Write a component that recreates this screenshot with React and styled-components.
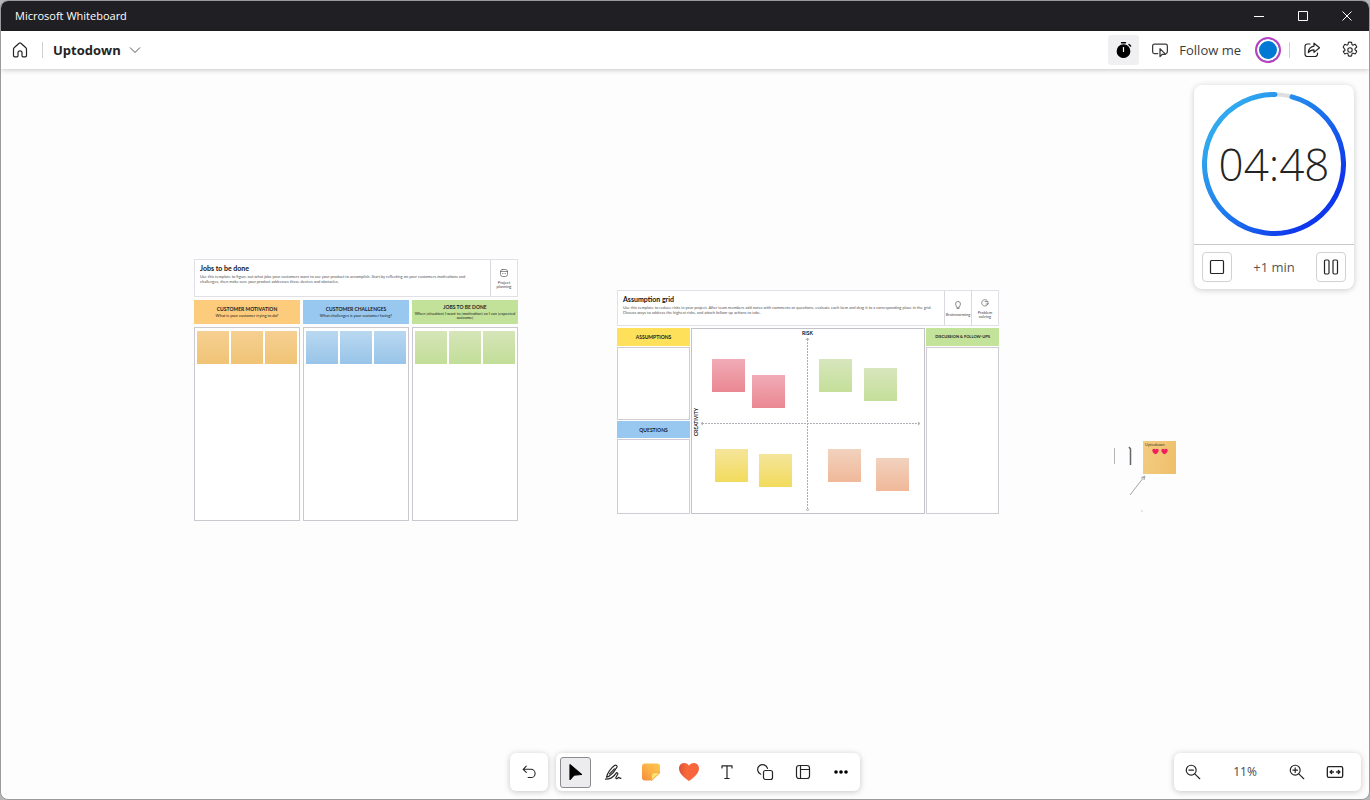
import React from 'react';
import styled, { createGlobalStyle } from 'styled-components';

const GlobalStyle = createGlobalStyle`
  * {
    box-sizing: border-box;
  }

  body {
    margin: 0;
    background: #b4b6b8;
    font-family: 'Open Sans', 'Noto Sans', sans-serif;
    color: #242424;
  }

  button {
    font-family: inherit;
    color: inherit;
    margin: 0;
    padding: 0;
    border: 0;
    background: transparent;
    cursor: pointer;
  }

  h1, h2, h3, p {
    margin: 0;
  }
`;

const Window = styled.div`
  display: flex;
  flex-direction: column;
  height: 100vh;
  border: 1px solid #9a9a9c;
  border-radius: 8px;
  overflow: hidden;
  background: #fdfdfd;
`;

const TitleBar = styled.header`
  display: flex;
  align-items: center;
  justify-content: space-between;
  height: 30px;
  flex-shrink: 0;
  padding-left: 14px;
  background: #201f23;
  color: #fff;
`;

const AppName = styled.span`
  font-size: 11px;
  line-height: 16px;
`;

const Row = styled.div`
  display: flex;
  align-items: center;
  height: 100%;
`;

const CaptionButton = styled.button`
  display: flex;
  align-items: center;
  justify-content: center;
  width: 44px;
  height: 30px;
`;

const Toolbar = styled.nav`
  position: relative;
  z-index: 1;
  display: flex;
  align-items: center;
  justify-content: space-between;
  height: 38px;
  flex-shrink: 0;
  background: #fff;
  box-shadow: 0 1px 5px rgba(0, 0, 0, 0.22);
`;

const IconButton = styled.button`
  display: flex;
  align-items: center;
  justify-content: center;
  width: 38px;
  height: 38px;
`;

const TimerToggle = styled(IconButton)`
  width: 31px;
  height: 30px;
  border-radius: 3px;
  background: #f0eff1;
`;

const Separator = styled.span`
  width: 1px;
  height: 16px;
  margin: 0 ${({ $after }) => $after}px 0 ${({ $before }) => $before}px;
  background: #d0d0d0;
`;

const BoardName = styled.button`
  display: flex;
  align-items: center;
  gap: 8px;
  font-size: 13px;
  line-height: 20px;
  font-weight: 700;
`;

const FollowButton = styled.button`
  display: flex;
  align-items: center;
  gap: 10px;
  margin: 0 14px 0 12px;
  font-size: 13px;
  line-height: 20px;
  color: #3b3b3b;
`;

const Avatar = styled.button`
  width: 26px;
  height: 26px;
  border: 2px solid #bb3fbf;
  border-radius: 50%;
  background: #0078d4;
  box-shadow: inset 0 0 0 2px #fff;
`;

const Surface = styled.main`
  position: relative;
  flex: 1;
  overflow: hidden;
`;

const Placed = styled.section`
  position: absolute;
  left: ${({ $x }) => $x}px;
  top: ${({ $y }) => $y}px;
  width: ${({ $width }) => $width}px;
`;

const BoardHeader = styled.div`
  display: flex;
  height: ${({ $height }) => $height}px;
  border: 1px solid #e2e0e6;
  background: #fff;
`;

const BoardIntro = styled.div`
  flex: 1;
  padding: 4px 6px 0 5px;
`;

const BoardTitle = styled.h2`
  font-family: Lato, sans-serif;
  font-size: 7px;
  line-height: 8px;
  font-weight: 700;
  color: #111;
`;

const BoardText = styled.p`
  margin-top: 2px;
  font-family: Lato, sans-serif;
  font-size: 4px;
  line-height: 5px;
  color: #555;
`;

const BoardTag = styled.div`
  display: flex;
  flex-direction: column;
  align-items: center;
  justify-content: center;
  gap: 3px;
  width: 27px;
  border-left: 1px solid #dad8df;
  font-family: Lato, sans-serif;
  font-size: 4px;
  line-height: 4px;
  text-align: center;
  color: #444;
`;

const Columns = styled.div`
  display: grid;
  grid-template-columns: repeat(3, 1fr);
  gap: 3px;
  margin-top: 3px;
`;

const ColumnHead = styled.div`
  display: flex;
  flex-direction: column;
  align-items: center;
  justify-content: center;
  gap: 2px;
  height: ${({ $height }) => $height}px;
  background: ${({ $color }) => $color};
  font-family: Lato, sans-serif;
  font-size: 4px;
  line-height: 4px;
  text-align: center;
  color: #1c1c1c;
`;

const ColumnTitle = styled.h3`
  font-size: ${({ $small }) => ($small ? 4 : 5)}px;
  line-height: 6px;
  font-weight: 700;
  white-space: nowrap;
`;

const ColumnBody = styled.div`
  display: flex;
  gap: 2px;
  height: 194px;
  padding: 3px 2px;
  border: 1px solid #cbc9cf;
  background: #fff;
`;

const Note = styled.div`
  flex: 1;
  height: 33px;
  background: linear-gradient(${({ $from, $to }) => `${$from}, ${$to}`});
`;

const GridLayout = styled.div`
  display: grid;
  grid-template-columns: 73px 1fr 73px;
  gap: 1px;
  margin-top: 2px;
`;

const Side = styled.div`
  display: flex;
  flex-direction: column;
  gap: 1px;
  height: 186px;
`;

const Box = styled.div`
  flex: ${({ $height }) => ($height ? `0 0 ${$height}px` : 1)};
  border: 1px solid #cfcdd3;
  background: #fff;
`;

const Matrix = styled.div`
  position: relative;
  border: 1px solid #c4c2c9;
  background: #fff;
`;

const Axes = styled.svg`
  display: block;
  width: 100%;
  height: 100%;
`;

const AxisLabel = styled.span`
  position: absolute;
  left: ${({ $x }) => $x}px;
  top: ${({ $y }) => $y}px;
  font-family: Lato, sans-serif;
  font-size: 5px;
  line-height: 6px;
  font-weight: 700;
  color: #111;
  writing-mode: ${({ $vertical }) => ($vertical ? 'vertical-rl' : 'horizontal-tb')};
  transform: ${({ $vertical }) => ($vertical ? 'rotate(180deg)' : 'none')};
`;

const LooseNote = styled(Note)`
  position: absolute;
  left: ${({ $x }) => $x}px;
  top: ${({ $y }) => $y}px;
  width: 33px;
`;

const HeartNote = styled.div`
  width: 33px;
  height: 33px;
  padding: 1px 2px;
  background: linear-gradient(100deg, #f3cc80, #eebf6b);
  font-size: 4px;
  line-height: 5px;
`;

const Hearts = styled.div`
  display: flex;
  justify-content: center;
  gap: 2px;
  margin-top: 1px;
`;

const TimerCard = styled.aside`
  position: absolute;
  top: 16px;
  right: 15px;
  width: 160px;
  border-radius: 8px;
  background: #fff;
  box-shadow: 0 1px 6px rgba(0, 0, 0, 0.2);
`;

const TimerFace = styled.div`
  display: grid;
  place-items: center;
  padding: 7px 8px 8px;
  border-bottom: 1px solid #c8c8c8;

  > * {
    grid-area: 1 / 1;
  }
`;

const TimeLeft = styled.time`
  font-size: 44px;
  line-height: 48px;
  font-weight: 350;
`;

const TimerControls = styled.div`
  display: flex;
  align-items: center;
  justify-content: space-between;
  padding: 7px 8px;
`;

const TimerButton = styled.button`
  display: flex;
  align-items: center;
  justify-content: center;
  width: 30px;
  height: 30px;
  border: 1px solid #d1d1d1;
  border-radius: 4px;
`;

const AddMinute = styled.button`
  font-size: 13px;
  line-height: 20px;
  color: #555;
`;

const BottomBar = styled.div`
  position: absolute;
  left: 0;
  right: 0;
  bottom: 8px;
  display: flex;
  justify-content: center;
  gap: 8px;
`;

const Tray = styled.div`
  display: flex;
  height: 38px;
  border-radius: 6px;
  background: #fff;
  box-shadow: 0 1px 6px rgba(0, 0, 0, 0.22);
`;

const ToolButton = styled(IconButton)`
  > span {
    display: flex;
    align-items: center;
    justify-content: center;
    width: 31px;
    height: 31px;
    border: 1px solid ${({ $active }) => ($active ? '#8a8a8c' : 'transparent')};
    border-radius: 3px;
    background: ${({ $active }) => ($active ? '#ececee' : 'transparent')};
  }
`;

const ZoomTray = styled(Tray)`
  position: absolute;
  right: 8px;
  bottom: 8px;
  padding-right: 7px;
`;

const ZoomLevel = styled.button`
  width: 66px;
  font-size: 12px;
  line-height: 16px;
  color: #484848;
`;

const Icon = ({ size = 20, width = 1.2, children }) => (
  <svg
    width={size}
    height={size}
    viewBox="0 0 20 20"
    fill="none"
    stroke="currentColor"
    strokeWidth={width}
    strokeLinecap="round"
    strokeLinejoin="round"
    aria-hidden="true"
  >
    {children}
  </svg>
);

const HomeIcon = () => (
  <Icon>
    <path d="M3.5 9.2c0-.6.2-1 .6-1.400l5-4.500a1.300 1.300 0 0 1 1.800 0l5 4.500c.4.4.6.8.6 1.400v6.300c0 .8-.5 1.300-1.200 1.300H13c-.6 0-1-.4-1-1v-3c0-1.200-.8-2-2-2s-2 .8-2 2v3c0 .6-.4 1-1 1H4.700c-.7 0-1.200-.5-1.200-1.300z" />
  </Icon>
);

const StopwatchIcon = () => (
  <Icon>
    <circle cx="9.500" cy="11.200" r="6.300" fill="#000" stroke="#000" />
    <path d="M7.500 2.700h4M15 4.400l1.600 1.600" stroke="#000" strokeWidth="1.400" />
    <path d="M9.500 7.500v4" stroke="#fff" />
  </Icon>
);

const FollowIcon = () => (
  <Icon size={18} width={1.400}>
    <path d="M7.500 14H3.800a2 2 0 0 1-2-2V5.500a2 2 0 0 1 2-2h12.400a2 2 0 0 1 2 2V12c0 1-.6 1.700-1.600 1.900" />
    <path d="M10 8.500v8.800l2.600-2.500h3.600z" />
  </Icon>
);

const ShareIcon = () => (
  <Icon>
    <path d="M8 4H5.500A2.500 2.500 0 0 0 3 6.500v7.500a2.500 2.500 0 0 0 2.500 2.500H13a2.500 2.500 0 0 0 2.500-2.500v-1" />
    <path d="M12 3.200l5.500 4.600-5.500 4.600V9.800c-2.600 0-4.300.8-5.700 2.800.3-3.600 2.200-6 5.700-6.500z" />
  </Icon>
);

const GearIcon = () => (
  <Icon width={1.100}>
    <circle cx="10" cy="10" r="2.200" />
    <path d="M8.400 2.300a8 8 0 0 1 3.200 0l.3 1.900c.1.700.8 1.100 1.500.8l1.800-.7a8 8 0 0 1 1.600 2.800l-1.500 1.200c-.5.500-.5 1.300 0 1.700l1.500 1.200a8 8 0 0 1-1.600 2.800l-1.800-.7c-.7-.2-1.400.1-1.500.8l-.3 1.900a8 8 0 0 1-3.200 0l-.3-1.900c-.1-.7-.8-1.100-1.500-.8l-1.800.7a8 8 0 0 1-1.600-2.800L4.700 10.900c.5-.5.500-1.300 0-1.700L3.200 7.100a8 8 0 0 1 1.600-2.800l1.800.7c.7.2 1.400-.1 1.500-.8z" />
  </Icon>
);

const UndoIcon = () => (
  <Icon size={18}>
    <path d="M7 3.500L3.500 7 7 10.500M3.800 7h8.400a4.600 4.600 0 0 1 0 9.200H9" />
  </Icon>
);

const CursorIcon = () => (
  <Icon>
    <path d="M5 2.700v14.800l4-4.400 7.500-.6z" fill="#000" stroke="#000" />
  </Icon>
);

const InkIcon = () => (
  <Icon>
    <path d="M3.500 15.300c.6-3.800 4.600-9.600 8-11.900 1.500-1 3.200.3 2.400 1.900-1.500 3-5.200 7.200-8.200 9.100z" />
    <path d="M6.500 11.800l5-5M2.500 17.200c4.800 0 8.800-3.300 10.500-5.900.8-1.200 2.400-.2 1.700 1l-1.700 2.900c-.6 1.200.5 2 1.600 1.100l.8-.8c.8-.7 1.200 1.300 2.600.8" />
  </Icon>
);

const NoteIcon = () => (
  <svg width="20" height="20" viewBox="0 0 20 20" aria-hidden="true">
    <defs>
      <linearGradient id="noteFill" x1="0" y1="1" x2="1" y2="0">
        <stop offset="0" stopColor="#f58a3c" />
        <stop offset="0.500" stopColor="#fcb046" />
        <stop offset="1" stopColor="#fdc951" />
      </linearGradient>
    </defs>
    <path d="M4 1.500h12A3 3 0 0 1 19 4.500V11l-8 7.500H4a3 3 0 0 1-3-3v-11a3 3 0 0 1 3-3z" fill="url(#noteFill)" />
    <path d="M19 10.500h-5.500a3 3 0 0 0-3 3v5z" fill="#fee06e" stroke="#f0a03a" strokeWidth="0.600" />
  </svg>
);

const HeartIcon = () => (
  <svg width="22" height="20" viewBox="0 0 22 20" aria-hidden="true">
    <defs>
      <linearGradient id="heartFill" x1="0" y1="0" x2="1" y2="0">
        <stop offset="0" stopColor="#d9533b" />
        <stop offset="0.350" stopColor="#f8673a" />
        <stop offset="1" stopColor="#f6663f" />
      </linearGradient>
    </defs>
    <path d="M11 19C6 15.600 1 11.500 1 6.500 1 3.200 3.300 1 6.200 1 8.300 1 10 2 11 3.800 12 2 13.700 1 15.800 1 18.700 1 21 3.200 21 6.500c0 5-5 9.100-10 12.500z" fill="url(#heartFill)" />
  </svg>
);

const TextIcon = () => (
  <Icon>
    <path d="M5 6V3.800h10V6M10 3.800v12.700M7.800 16.500h4.400" />
  </Icon>
);

const ShapesIcon = () => (
  <Icon>
    <path d="M5.700 12.200a5 5 0 1 1 6.800-5.800" />
    <rect x="8.500" y="8.500" width="9" height="9" rx="2" />
  </Icon>
);

const TemplateIcon = () => (
  <Icon>
    <rect x="3.500" y="3.500" width="13" height="13" rx="2.500" />
    <path d="M7.500 3.500v13M7.500 7.500h9" />
  </Icon>
);

const MoreIcon = () => (
  <Icon>
    <g fill="#000" stroke="none">
      <circle cx="5" cy="10" r="1.800" />
      <circle cx="10" cy="10" r="1.800" />
      <circle cx="15" cy="10" r="1.800" />
    </g>
  </Icon>
);

const ZoomIcon = ({ plus }) => (
  <Icon size={18} width={1.300}>
    <circle cx="8" cy="8" r="5.500" />
    <path d={plus ? 'M12 12L17.500 17.500M5.500 8h5M8 5.500v5' : 'M12 12L17.500 17.500M5.500 8h5'} />
  </Icon>
);

const FitIcon = () => (
  <Icon size={18} width={1.500}>
    <rect x="1.500" y="4" width="17" height="12" rx="1.500" />
    <path d="M8.300 10H4.500M6.300 8.200L4.500 10l1.800 1.800M11.700 10h3.800M13.700 8.200l1.800 1.800-1.800 1.800" />
  </Icon>
);

const tools = [
  { label: 'Select', icon: <CursorIcon />, active: true },
  { label: 'Ink', icon: <InkIcon /> },
  { label: 'Notes', icon: <NoteIcon /> },
  { label: 'Reactions', icon: <HeartIcon /> },
  { label: 'Text', icon: <TextIcon /> },
  { label: 'Shapes', icon: <ShapesIcon /> },
  { label: 'Templates', icon: <TemplateIcon /> },
  { label: 'More options', icon: <MoreIcon /> }
];

const jobColumns = [
  { title: 'CUSTOMER MOTIVATION', text: 'What is your customer trying to do?', head: '#fccb7c', from: '#f6d092', to: '#f0c375' },
  { title: 'CUSTOMER CHALLENGES', text: 'What challenges is your customer facing?', head: '#98c8f0', from: '#b9d8f1', to: '#98c4e8' },
  { title: 'JOBS TO BE DONE', text: 'When [situation] I want to [motivation] so I can [expected outcome]', head: '#c2e29a', from: '#d6e5b9', to: '#c2de98' }
];

const matrixNotes = [
  { x: 20, y: 30, from: '#f0acb6', to: '#ea8792' },
  { x: 60, y: 46, from: '#f0acb6', to: '#ea8792' },
  { x: 127, y: 30, from: '#d7e6bd', to: '#c4df99' },
  { x: 172, y: 39, from: '#d7e6bd', to: '#c4df99' },
  { x: 23, y: 120, from: '#f5e59b', to: '#f2db5c' },
  { x: 67, y: 125, from: '#f5e59b', to: '#f2db5c' },
  { x: 136, y: 120, from: '#f2d2be', to: '#f0b899' },
  { x: 184, y: 129, from: '#f2d2be', to: '#f0b899' }
];

const JobsBoard = () => (
  <Placed $x={193} $y={190} $width={324}>
    <BoardHeader $height={38}>
      <BoardIntro>
        <BoardTitle>Jobs to be done</BoardTitle>
        <BoardText>
          Use this template to figure out what jobs your customers want to use your product to accomplish. Start by reflecting on your customers motivations and challenges, then make sure your product addresses these desires and obstacles.
        </BoardText>
      </BoardIntro>
      <BoardTag>
        <Icon size={10}>
          <rect x="3" y="3" width="14" height="14" rx="4" />
          <path d="M3 7h14M7 11h1M12 11h1" />
        </Icon>
        <span>Project<br />planning</span>
      </BoardTag>
    </BoardHeader>
    <Columns>
      {jobColumns.map(({ title, text, head }) => (
        <ColumnHead key={title} $color={head} $height={24}>
          <ColumnTitle>{title}</ColumnTitle>
          <span>{text}</span>
        </ColumnHead>
      ))}
      {jobColumns.map(({ title, from, to }) => (
        <ColumnBody key={title}>
          <Note $from={from} $to={to} />
          <Note $from={from} $to={to} />
          <Note $from={from} $to={to} />
        </ColumnBody>
      ))}
    </Columns>
  </Placed>
);

const AssumptionBoard = () => (
  <Placed $x={616} $y={221} $width={382}>
    <BoardHeader $height={36}>
      <BoardIntro>
        <BoardTitle>Assumption grid</BoardTitle>
        <BoardText>
          Use this template to reduce risks in your project. After team members add notes with comments or questions, evaluate each item and drag it to a corresponding place in the grid. Discuss ways to address the highest risks, and attach follow-up actions to take.
        </BoardText>
      </BoardIntro>
      <BoardTag>
        <Icon size={10}>
          <path d="M7.500 14c0-2-2.500-3-2.500-6a5 5 0 0 1 10 0c0 3-2.500 4-2.500 6zM8 17h4" />
        </Icon>
        <span>Brainstorming</span>
      </BoardTag>
      <BoardTag>
        <Icon size={10}>
          <path d="M14 4.500A6.500 6.500 0 1 0 16 12M10 7h6v5h-4" />
        </Icon>
        <span>Problem<br />solving</span>
      </BoardTag>
    </BoardHeader>
    <GridLayout>
      <Side>
        <ColumnHead $color="#fee05a" $height={18}>
          <ColumnTitle>ASSUMPTIONS</ColumnTitle>
        </ColumnHead>
        <Box $height={73} />
        <ColumnHead $color="#98c8f0" $height={17}>
          <ColumnTitle>QUESTIONS</ColumnTitle>
        </ColumnHead>
        <Box />
      </Side>
      <Matrix>
        <Axes viewBox="0 0 232 184" fill="none" stroke="#aeacb4" strokeDasharray="2 1">
          <path d="M115.500 10v171M10 94.500h217" />
          <path d="M114 11l1.500-2 1.500 2M114 180l1.500 2 1.500-2M11 93l-2 1.500 2 1.500M226 93l2 1.500-2 1.500" strokeDasharray="none" />
        </Axes>
        <AxisLabel $x={110} $y={1}>RISK</AxisLabel>
        <AxisLabel $x={1} $y={79} $vertical>CREATIVITY</AxisLabel>
        {matrixNotes.map(({ x, y, from, to }) => (
          <LooseNote key={`${x}-${y}`} $x={x} $y={y} $from={from} $to={to} />
        ))}
      </Matrix>
      <Side>
        <ColumnHead $color="#c3e29a" $height={18}>
          <ColumnTitle $small>DISCUSSION &amp; FOLLOW-UPS</ColumnTitle>
        </ColumnHead>
        <Box />
      </Side>
    </GridLayout>
  </Placed>
);

const SmallHeart = () => (
  <svg width="7" height="7" viewBox="0 0 22 20" aria-hidden="true">
    <path d="M11 19C6 15.600 1 11.500 1 6.500 1 3.200 3.300 1 6.200 1 8.300 1 10 2 11 3.800 12 2 13.700 1 15.800 1 18.700 1 21 3.200 21 6.500c0 5-5 9.100-10 12.500z" fill="#ef1f5c" />
  </svg>
);

const Sketches = () => (
  <>
    <Placed $x={1111} $y={375} $width={36}>
      <svg width="36" height="70" viewBox="0 0 36 70" fill="none" aria-hidden="true">
        <path d="M2.500 4v16" stroke="#b4b4b8" />
        <path d="M17 3l1.500 2v16" stroke="#66666c" strokeWidth="1.500" />
        <path d="M18 51L32 33M29 34l4-2-1 4" stroke="#a3a3ab" />
        <path d="M29 67h2" stroke="#ccc" />
      </svg>
    </Placed>
    <Placed $x={1142} $y={372} $width={33}>
      <HeartNote>
        Uptodown
        <Hearts>
          <SmallHeart />
          <SmallHeart />
        </Hearts>
      </HeartNote>
    </Placed>
  </>
);

const Timer = () => (
  <TimerCard>
    <TimerFace>
      <svg width="144" height="144" viewBox="0 0 144 144" fill="none" aria-hidden="true">
        <defs>
          <linearGradient id="ringStroke" gradientUnits="userSpaceOnUse" x1="20" y1="30" x2="118" y2="112">
            <stop offset="0" stopColor="#31a9ee" />
            <stop offset="0.500" stopColor="#1d78ec" />
            <stop offset="1" stopColor="#0f37ec" />
          </linearGradient>
        </defs>
        <circle cx="72" cy="72" r="69.500" stroke="#dedede" strokeWidth="4" />
        <path
          d="M90 4.870A69.500 69.500 0 1 1 73 2.500"
          stroke="url(#ringStroke)"
          strokeWidth="5"
          strokeLinecap="round"
        />
      </svg>
      <TimeLeft>04:48</TimeLeft>
    </TimerFace>
    <TimerControls>
      <TimerButton aria-label="Stop timer">
        <Icon>
          <rect x="3.500" y="3.500" width="13" height="13" rx="1" />
        </Icon>
      </TimerButton>
      <AddMinute>+1 min</AddMinute>
      <TimerButton aria-label="Pause timer">
        <Icon>
          <rect x="3.500" y="3" width="4.500" height="14" rx="1.200" />
          <rect x="12" y="3" width="4.500" height="14" rx="1.200" />
        </Icon>
      </TimerButton>
    </TimerControls>
  </TimerCard>
);

export default () => (
  <Window>
    <GlobalStyle />
    <TitleBar>
      <AppName>Microsoft Whiteboard</AppName>
      <Row>
        <CaptionButton aria-label="Minimize">
          <svg width="10" height="10" stroke="#fff"><path d="M0 5.500h10" /></svg>
        </CaptionButton>
        <CaptionButton aria-label="Maximize">
          <svg width="10" height="10" stroke="#fff" fill="none"><path d="M.5.500h9v9h-9z" /></svg>
        </CaptionButton>
        <CaptionButton aria-label="Close">
          <svg width="10" height="10" stroke="#fff"><path d="M.5.500l9 9M9.500.500l-9 9" /></svg>
        </CaptionButton>
      </Row>
    </TitleBar>
    <Toolbar>
      <Row>
        <IconButton aria-label="Home"><HomeIcon /></IconButton>
        <Separator $before={3} $after={10} />
        <BoardName>
          Uptodown
          <svg width="12" height="8" viewBox="0 0 12 8" fill="none" stroke="#555" aria-hidden="true">
            <path d="M1 1.500l5 5 5-5" />
          </svg>
        </BoardName>
      </Row>
      <Row>
        <TimerToggle aria-label="Timer"><StopwatchIcon /></TimerToggle>
        <FollowButton>
          <FollowIcon />
          Follow me
        </FollowButton>
        <Avatar aria-label="Account" />
        <Separator $before={8} $after={3} />
        <IconButton aria-label="Share"><ShareIcon /></IconButton>
        <IconButton aria-label="Settings"><GearIcon /></IconButton>
      </Row>
    </Toolbar>
    <Surface>
      <JobsBoard />
      <AssumptionBoard />
      <Sketches />
      <Timer />
      <BottomBar>
        <Tray>
          <IconButton aria-label="Undo"><UndoIcon /></IconButton>
        </Tray>
        <Tray>
          {tools.map(({ label, icon, active }) => (
            <ToolButton key={label} aria-label={label} $active={active}>
              <span>{icon}</span>
            </ToolButton>
          ))}
        </Tray>
      </BottomBar>
      <ZoomTray>
        <IconButton aria-label="Zoom out"><ZoomIcon /></IconButton>
        <ZoomLevel>11%</ZoomLevel>
        <IconButton aria-label="Zoom in"><ZoomIcon plus /></IconButton>
        <IconButton aria-label="Fit to screen"><FitIcon /></IconButton>
      </ZoomTray>
    </Surface>
  </Window>
);
